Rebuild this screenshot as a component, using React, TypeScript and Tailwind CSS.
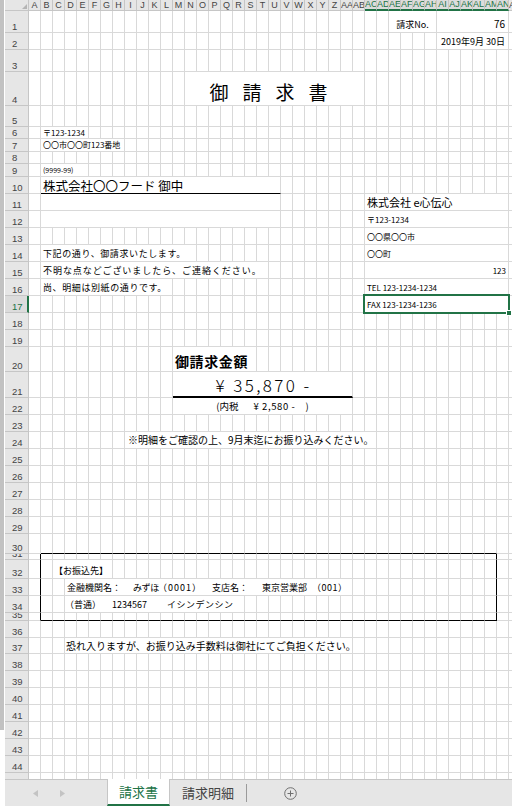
import React from "react";

type Seg = {
  c: number;
  n: number;
  cls: string;
  content?: React.ReactNode;
  b?: string;
  sel?: boolean;
};
type Row = { n: number; h: string; segs?: Seg[] };

const JP = "font-['Noto_Sans_CJK_JP',sans-serif]";
const LS = "font-['Liberation_Sans','Noto_Sans_CJK_JP',sans-serif]";

const colNames = Array.from({ length: 41 }, (_, i) =>
  i < 26 ? String.fromCharCode(65 + i) : "A" + String.fromCharCode(65 + i - 26)
);

const rows: Row[] = [
  {
    n: 1,
    h: "h-[22px]",
    segs: [
      { c: 30, n: 4, cls: "col-span-4 justify-center pb-[3px] text-[9px]", content: "請求No." },
      { c: 34, n: 6, cls: "col-span-6 justify-end pr-[3px] pb-[3px] text-[10px]", content: "76" },
    ],
  },
  {
    n: 2,
    h: "h-[17px]",
    segs: [
      { c: 34, n: 6, cls: "col-span-6 justify-end pr-[3px] pb-[3px] text-[9px]", content: "2019年9月 30日" },
    ],
  },
  { n: 3, h: "h-[22px]" },
  {
    n: 4,
    h: "h-[34px]",
    segs: [
      {
        c: 13,
        n: 15,
        cls: "col-span-15 justify-center pb-[4px] text-[19px] tracking-[14px] pl-[2px]",
        content: "御請求書",
      },
    ],
  },
  { n: 5, h: "h-[21px]" },
  { n: 6, h: "h-[12px]", segs: [{ c: 1, n: 4, cls: "col-span-4 pl-[2px] pb-[1px] text-[8px]", content: "〒123-1234" }] },
  {
    n: 7,
    h: "h-[13px]",
    segs: [{ c: 1, n: 7, cls: "col-span-7 pl-[2px] pb-[2px] text-[8px]", content: "〇〇市〇〇町123番地" }],
  },
  { n: 8, h: "h-[12px]" },
  { n: 9, h: "h-[13px]", segs: [{ c: 1, n: 4, cls: "col-span-4 pl-[2px] pb-[2px] text-[7px]", content: "(9999-99)" }] },
  {
    n: 10,
    h: "h-[17px]",
    segs: [
      {
        c: 1,
        n: 20,
        cls: "col-span-20 pl-[2px] pb-[1px] text-[12.5px]",
        b: "border-b-black",
        content: "株式会社〇〇フード 御中",
      },
    ],
  },
  {
    n: 11,
    h: "h-[17px]",
    segs: [
      { c: 1, n: 20, cls: "col-span-20" },
      { c: 28, n: 12, cls: "col-span-12 pl-[2px] pb-[2px] text-[11px]", content: "株式会社 e心伝心" },
    ],
  },
  {
    n: 12,
    h: "h-[17px]",
    segs: [
      { c: 1, n: 20, cls: "col-span-20" },
      { c: 28, n: 12, cls: "col-span-12 pl-[2px] pb-[3px] text-[8px]", content: "〒123-1234" },
    ],
  },
  {
    n: 13,
    h: "h-[17px]",
    segs: [{ c: 28, n: 12, cls: "col-span-12 pl-[2px] pb-[3px] text-[8px]", content: "〇〇県〇〇市" }],
  },
  {
    n: 14,
    h: "h-[17px]",
    segs: [
      {
        c: 1,
        n: 13,
        cls: "col-span-13 pl-[2px] pb-[3px] text-[9px] tracking-[0.6px]",
        content: "下記の通り、御請求いたします。",
      },
      { c: 28, n: 12, cls: "col-span-12 pl-[2px] pb-[3px] text-[8px]", content: "〇〇町" },
    ],
  },
  {
    n: 15,
    h: "h-[17px]",
    segs: [
      {
        c: 1,
        n: 19,
        cls: "col-span-19 pl-[2px] pb-[3px] text-[9px] tracking-[0.95px]",
        content: "不明な点などございましたら、ご連絡ください。",
      },
      { c: 28, n: 12, cls: "col-span-12 justify-end pr-[2px] pb-[3px] text-[8px]", content: "123" },
    ],
  },
  {
    n: 16,
    h: "h-[17px]",
    segs: [
      {
        c: 1,
        n: 11,
        cls: "col-span-11 pl-[2px] pb-[3px] text-[9px] tracking-[0.6px]",
        content: "尚、明細は別紙の通りです。",
      },
      { c: 28, n: 12, cls: "col-span-12 pl-[2px] pb-[3px] text-[8px]", content: "TEL 123-1234-1234" },
    ],
  },
  {
    n: 17,
    h: "h-[17px]",
    segs: [
      {
        c: 28,
        n: 12,
        cls: "col-span-12 pl-[2px] pb-[3px] text-[8px]",
        content: "FAX 123-1234-1236",
        sel: true,
      },
    ],
  },
  { n: 18, h: "h-[17px]" },
  { n: 19, h: "h-[17px]" },
  {
    n: 20,
    h: "h-[25px]",
    segs: [
      { c: 12, n: 7, cls: "col-span-7 pl-[2px] pb-[3px] text-[14px] font-bold tracking-[0.6px]", content: "御請求金額" },
    ],
  },
  {
    n: 21,
    h: "h-[26px]",
    segs: [
      {
        c: 12,
        n: 15,
        cls: "col-span-15 justify-center pb-[3px] pl-[2px] text-[17px] font-light tracking-[2.4px]",
        b: "border-b-2 border-b-black",
        content: "¥ 35,870 -",
      },
    ],
  },
  {
    n: 22,
    h: "h-[17px]",
    segs: [
      {
        c: 12,
        n: 15,
        cls: "col-span-15 justify-center pb-[3px] text-[9.5px]",
        content: (
          <>
            <span>(内税</span>
            <span className="ml-[15px] tracking-[0.6px]">¥ 2,580 -</span>
            <span className="ml-[10px]">)</span>
          </>
        ),
      },
    ],
  },
  { n: 23, h: "h-[17px]" },
  {
    n: 24,
    h: "h-[17px]",
    segs: [
      {
        c: 8,
        n: 21,
        cls: "col-span-21 pl-[3px] pb-[3px] text-[10px]",
        content: "※明細をご確認の上、9月末迄にお振り込みください。",
      },
    ],
  },
  { n: 25, h: "h-[17px]" },
  { n: 26, h: "h-[17px]" },
  { n: 27, h: "h-[17px]" },
  { n: 28, h: "h-[17px]" },
  { n: 29, h: "h-[17px]" },
  { n: 30, h: "h-[20px]" },
  { n: 31, h: "h-[6px]" },
  {
    n: 32,
    h: "h-[19px]",
    segs: [{ c: 2, n: 5, cls: "col-span-5 pl-[1px] pb-[3px] text-[9px]", content: "【お振込先】" }],
  },
  {
    n: 33,
    h: "h-[17px]",
    segs: [
      {
        c: 3,
        n: 24,
        cls: "col-span-24 pl-[2px] pb-[3px] text-[9px]",
        content: (
          <>
            <span className="w-[66px] shrink-0">金融機関名：</span>
            <span className="w-[25px] shrink-0 [font-feature-settings:'palt']">みずほ</span>
            <span className="w-[54px] shrink-0 tracking-[1px]">（0001）</span>
            <span className="w-[50px] shrink-0">支店名：</span>
            <span className="w-[50px] shrink-0">東京営業部</span>
            <span className="shrink-0 tracking-[0.5px]">（001）</span>
          </>
        ),
      },
    ],
  },
  {
    n: 34,
    h: "h-[17px]",
    segs: [
      {
        c: 3,
        n: 15,
        cls: "col-span-15 pb-[3px] text-[9px]",
        content: (
          <>
            <span className="w-[47px] shrink-0">（普通）</span>
            <span className="w-[55px] shrink-0">1234567</span>
            <span className="shrink-0 tracking-[0.5px]">イシンデンシン</span>
          </>
        ),
      },
    ],
  },
  { n: 35, h: "h-[8px]" },
  { n: 36, h: "h-[17px]" },
  {
    n: 37,
    h: "h-[16px]",
    segs: [
      {
        c: 3,
        n: 24,
        cls: "col-span-24 pl-[1px] pb-[2px] text-[10px]",
        content: "恐れ入りますが、お振り込み手数料は御社にてご負担ください。",
      },
    ],
  },
  { n: 38, h: "h-[17px]" },
  { n: 39, h: "h-[17px]" },
  { n: 40, h: "h-[17px]" },
  { n: 41, h: "h-[17px]" },
  { n: 42, h: "h-[17px]" },
  { n: 43, h: "h-[17px]" },
  { n: 44, h: "h-[17px]" },
  { n: 45, h: "h-[17px]" },
];

function SheetRow({ row }: { row: Row }) {
  const segs = row.segs ?? [];
  const boxSide = row.n >= 31 && row.n <= 35;
  const boxBottom = row.n === 30 || row.n === 35;
  const cells: React.ReactNode[] = [];
  let c = 0;
  while (c < 41) {
    const s = segs.find((x) => x.c === c);
    const last = s ? c + s.n - 1 : c;
    const right = boxSide && (last === 0 || last === 38) ? "border-r-black" : "border-r-[#d9d9d9]";
    const bottom = s?.b
      ? s.b
      : boxBottom && c >= 1 && last <= 38
      ? "border-b-black"
      : "border-b-[#d9d9d9]";
    if (s) {
      cells.push(
        <div
          key={c}
          className={`relative flex items-end whitespace-nowrap leading-none text-black border-r border-b ${right} ${bottom} ${
            s.sel ? "overflow-visible" : "overflow-hidden"
          } ${s.cls}`}
        >
          {s.content}
          {s.sel && (
            <div className="absolute -left-[2px] -top-[2px] -right-[2px] -bottom-[2px] border-2 border-[#217346] pointer-events-none">
              <div className="absolute -right-[4px] -bottom-[4px] w-[6px] h-[6px] bg-[#217346] border border-white" />
            </div>
          )}
        </div>
      );
      c += s.n;
    } else {
      cells.push(<div key={c} className={`border-r border-b ${right} ${bottom}`} />);
      c += 1;
    }
  }
  const selRow = row.n === 17;
  return (
    <div className={`flex shrink-0 ${row.h}`}>
      <div
        className={`w-[24px] shrink-0 flex items-end pl-[7px] pb-[1px] overflow-hidden border-b border-b-[#c6c6c6] text-[9.5px] leading-none ${LS} ${
          selRow
            ? "bg-[#dcdcdc] text-[#217346] border-r-2 border-r-[#217346]"
            : "bg-[#e6e6e6] text-[#444] border-r border-r-[#c6c6c6]"
        }`}
      >
        {row.n}
      </div>
      <div className="grid grid-cols-[repeat(41,12px)] h-full">{cells}</div>
    </div>
  );
}

export default function App() {
  return (
    <div className={`w-[512px] h-[806px] overflow-hidden bg-white flex ${JP}`}>
      <div className="w-[5px] shrink-0 flex flex-col">
        <div className="h-[730px] w-[4px] bg-[#c2c2c2]" />
      </div>
      <div className="flex-1 min-w-0 flex flex-col overflow-hidden">
        <div className="flex-1 min-h-0 overflow-hidden flex flex-col">
          <div className="flex h-[11px] shrink-0">
            <div className="w-[24px] shrink-0 bg-[#e6e6e6] border-r border-b border-r-[#c6c6c6] border-b-[#c6c6c6] flex items-end justify-end pr-[1px] pb-[1px]">
              <svg width="5" height="5" viewBox="0 0 5 5">
                <polygon points="5,0 5,5 0,5" fill="#b5b5b5" />
              </svg>
            </div>
            <div className="grid grid-cols-[repeat(41,12px)] h-full">
              {colNames.map((name, i) => {
                const sel = i >= 28 && i <= 39;
                return (
                  <div
                    key={name}
                    className={`overflow-hidden whitespace-nowrap text-center text-[9px] border-r border-r-[#c6c6c6] ${LS} ${
                      sel
                        ? "bg-[#dcdcdc] text-[#217346] border-b-2 border-b-[#217346] leading-[9px]"
                        : "bg-[#e6e6e6] text-[#444] border-b border-b-[#c6c6c6] leading-[10px]"
                    }`}
                  >
                    {name}
                  </div>
                );
              })}
            </div>
          </div>
          {rows.map((r) => (
            <SheetRow key={r.n} row={r} />
          ))}
        </div>
        <div className="h-[27px] shrink-0 flex bg-[#e6e6e6] border-t border-t-[#c6c6c6]">
          <div className="w-[102px] shrink-0 flex items-center pl-[28px] gap-[22px]">
            <svg width="5" height="7" viewBox="0 0 5 7">
              <polygon points="5,0 5,7 0,3.5" fill="#c3c3c3" />
            </svg>
            <svg width="5" height="7" viewBox="0 0 5 7">
              <polygon points="0,0 0,7 5,3.5" fill="#c3c3c3" />
            </svg>
          </div>
          <div className="w-[63px] shrink-0 -mt-[1px] bg-white border-x border-x-[#c6c6c6] border-b-2 border-b-[#217346] flex items-center justify-center text-[13px] text-[#217346]">
            請求書
          </div>
          <div className="px-[12px] flex items-center text-[13px] text-[#444]">請求明細</div>
          <div className="flex items-center">
            <div className="w-px h-[18px] bg-[#9a9a9a]" />
          </div>
          <div className="flex items-center pl-[37px]">
            <svg width="13" height="13" viewBox="0 0 13 13">
              <circle cx="6.5" cy="6.5" r="5.8" fill="none" stroke="#6f6f6f" strokeWidth="1" />
              <line x1="6.5" y1="3.5" x2="6.5" y2="9.5" stroke="#6f6f6f" strokeWidth="1" />
              <line x1="3.5" y1="6.5" x2="9.5" y2="6.5" stroke="#6f6f6f" strokeWidth="1" />
            </svg>
          </div>
        </div>
      </div>
    </div>
  );
}
